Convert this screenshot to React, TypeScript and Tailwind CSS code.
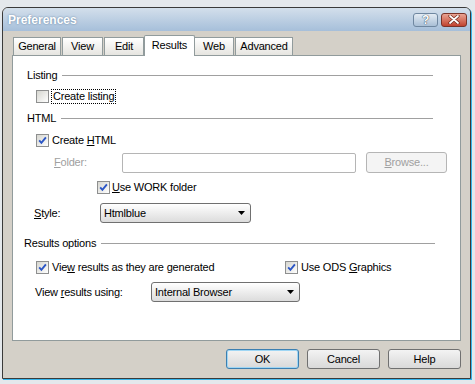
import React from "react";

const font = "font-['Liberation_Sans',Arial,sans-serif]";

function Check({ checked }: { checked?: boolean }) {
  return (
    <span className="w-[13px] h-[13px] shrink-0 border border-[#8e8f8f] bg-linear-to-br from-[#d6d6d0] to-white flex items-center justify-center">
      {checked && (
        <svg width="9" height="9" viewBox="0 0 9 9">
          <path d="M1.2 4.4 L3.4 6.8 L7.9 1.4" stroke="#2b56c6" strokeWidth="1.9" fill="none" />
        </svg>
      )}
    </span>
  );
}

function Group({ label, pl, width }: { label: string; pl: string; width: string }) {
  return (
    <div className={`flex items-center h-[16px] ${pl} ${width}`}>
      <span>{label}</span>
      <span className="flex-1 ml-[5px] h-px bg-[#a0a0a0]" />
    </div>
  );
}

function Select({ value, width }: { value: string; width: string }) {
  return (
    <div className={`${width} h-[20px] rounded-[3px] border border-[#707070] bg-linear-to-b from-white to-[#dcdcdc] flex items-center justify-between pl-[3px] pr-[5px]`}>
      <span>{value}</span>
      <svg width="7" height="4" viewBox="0 0 7 4">
        <path d="M0 0 H7 L3.5 4 Z" fill="#000" />
      </svg>
    </div>
  );
}

function Btn({ children, focused }: { children: React.ReactNode; focused?: boolean }) {
  return (
    <div
      className={`w-[73px] h-[20px] rounded-[3px] border flex items-center justify-center bg-linear-to-b from-[#f3f3f3] to-[#d9d9d9] ${
        focused ? "border-[#3c7fb1] shadow-[inset_0_0_0_1px_#9fd6f4]" : "border-[#707070]"
      }`}
    >
      {children}
    </div>
  );
}

const tabs = [
  { name: "General", w: "w-[48px]" },
  { name: "View", w: "w-[41px]" },
  { name: "Edit", w: "w-[40px]" },
  { name: "Results", w: "w-[51px]", active: true },
  { name: "Web", w: "w-[40px]" },
  { name: "Advanced", w: "w-[58px]" },
];

export default function App() {
  return (
    <div className={`w-[475px] h-[384px] bg-[#e4e8ec] overflow-hidden pt-[7px] pl-[2px] text-[11px] tracking-[-0.2px] text-black ${font}`}>
      <div className="w-[469px] h-[372px] border border-[#3a3a3a] rounded-t-[6px] overflow-hidden flex flex-col bg-[#d4d0c8] shadow-[1px_1px_0_#36b4ea]">
        {/* Title bar */}
        <div className="h-[23px] shrink-0 flex items-center justify-between bg-linear-to-b from-[#d3dfeb] to-[#a6bfda] pl-[5px] pr-[3px]">
          <span className="text-white font-bold text-[12px] tracking-normal [text-shadow:0_0_2px_#5a7a9a]">Preferences</span>
          <div className="flex gap-[3px]">
            <div className="w-[25px] h-[14px] rounded-[3px] border border-[#6f87a0] bg-linear-to-b from-[#e4ecf4] to-[#a9bfd6] flex items-center justify-center">
              <span className="text-white font-bold text-[12px] leading-none [text-shadow:0_0_1px_#33465a,0_0_1px_#33465a]">?</span>
            </div>
            <div className="w-[26px] h-[14px] rounded-[3px] border border-[#7a3328] bg-linear-to-b from-[#e9a393] to-[#c0412e] flex items-center justify-center">
              <svg width="12" height="9" viewBox="0 0 12 9">
                <path d="M2 1 L10 8 M10 1 L2 8" stroke="#6b2418" strokeWidth="3.2" strokeLinecap="round" />
                <path d="M2 1 L10 8 M10 1 L2 8" stroke="#fff" strokeWidth="1.8" strokeLinecap="round" />
              </svg>
            </div>
          </div>
        </div>

        {/* Body */}
        <div className="flex-1 flex flex-col pt-[4px] px-[9px]">
          <div className="h-[20px] flex items-start pl-[1px]">
            {tabs.map((t) =>
              t.active ? (
                <div
                  key={t.name}
                  className={`${t.w} h-[21px] relative z-10 bg-white border border-b-0 border-[#919b9c] rounded-t-[2px] flex items-center justify-center -mx-px pb-[1px]`}
                >
                  {t.name}
                </div>
              ) : (
                <div
                  key={t.name}
                  className={`${t.w} h-[18px] mt-[2px] mr-px bg-linear-to-b from-white to-[#e6e5e0] border border-b-0 border-[#919b9c] flex items-center justify-center`}
                >
                  {t.name}
                </div>
              )
            )}
          </div>

          {/* Panel */}
          <div className="w-[449px] h-[286px] border border-[#919b9c] bg-white flex flex-col">
            <div className="mt-[11px]">
              <Group label="Listing" pl="pl-[14px]" width="w-[420px]" />
            </div>
            <div className="mt-[5px] h-[16px] flex items-center pl-[23px] gap-[2px]">
              <Check />
              <span className="border border-dotted border-black px-px leading-[13px]">Create listing</span>
            </div>
            <div className="mt-[6px]">
              <Group label="HTML" pl="pl-[14px]" width="w-[420px]" />
            </div>
            <div className="mt-[6px] h-[16px] flex items-center pl-[23px] gap-[3px]">
              <Check checked />
              <span>
                Create <span className="underline">H</span>TML
              </span>
            </div>
            <div className="mt-[4px] h-[21px] flex items-center pl-[41px]">
              <span className="w-[68px] text-[#a0a0a0]">
                <span className="underline">F</span>older:
              </span>
              <div className="w-[234px] h-[20px] rounded-[2px] border border-[#b5b5b5] bg-white" />
              <div className="ml-[10px] w-[81px] h-[21px] rounded-[3px] border border-[#b5b5b5] bg-[#f4f4f4] flex items-center justify-center text-[#a0a0a0]">
                <span>
                  <span className="underline">B</span>rowse...
                </span>
              </div>
            </div>
            <div className="mt-[6px] h-[16px] flex items-center pl-[84px] gap-[2px]">
              <Check checked />
              <span>
                <span className="underline">U</span>se WORK folder
              </span>
            </div>
            <div className="mt-[8px] h-[20px] flex items-center pl-[21px]">
              <span className="w-[66px]">
                <span className="underline">S</span>tyle:
              </span>
              <Select value="Htmlblue" width="w-[151px]" />
            </div>
            <div className="mt-[12px]">
              <Group label="Results options" pl="pl-[11px]" width="w-[422px]" />
            </div>
            <div className="mt-[8px] h-[16px] flex items-center pl-[23px]">
              <div className="w-[249px] flex items-center gap-[3px]">
                <Check checked />
                <span>
                  Vie<span className="underline">w</span> results as they are generated
                </span>
              </div>
              <div className="flex items-center gap-[3px]">
                <Check checked />
                <span>
                  Use ODS <span className="underline">G</span>raphics
                </span>
              </div>
            </div>
            <div className="mt-[7px] h-[20px] flex items-center pl-[22px]">
              <span className="w-[116px]">
                View <span className="underline">r</span>esults using:
              </span>
              <Select value="Internal Browser" width="w-[149px]" />
            </div>
          </div>

          {/* Buttons */}
          <div className="mt-[8px] flex justify-end gap-[8px]">
            <Btn focused>OK</Btn>
            <Btn>Cancel</Btn>
            <Btn>Help</Btn>
          </div>
        </div>
      </div>
    </div>
  );
}
